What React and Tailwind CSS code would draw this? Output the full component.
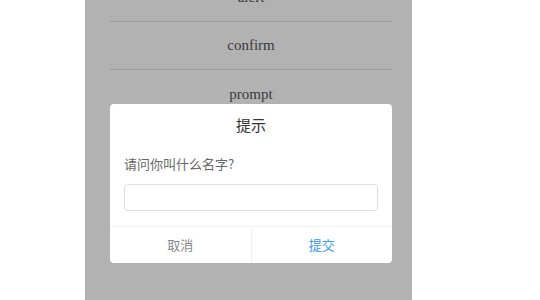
import React from 'react';

const items = ['alert', 'confirm', 'prompt'];

const App = () => {
  return (
    <div className="w-[540px] h-[300px] bg-white overflow-hidden">
      <div className="relative ml-[85px] w-[327px] h-[300px] bg-[#b2b2b2] overflow-hidden">
        <div className="-mt-[26px] pl-[25px] pr-[20px]">
          {items.map((name, i) => (
            <div
              key={name}
              className={`h-[48px] flex items-center justify-center text-[15px] text-[#3a3a3a] ${i < items.length - 1 ? 'border-b border-[#9c9c9c]' : ''}`}
              style={{ fontFamily: '"Liberation Serif", "Times New Roman", serif' }}
            >
              {name}
            </div>
          ))}
        </div>

        <div
          className="absolute left-[25px] top-[104px] w-[282px] bg-white rounded-[4px]"
          style={{ fontFamily: '"Noto Sans CJK SC", "Liberation Sans", sans-serif' }}
        >
          <div className="h-[42px] flex items-center justify-center text-[15px] text-[#333]">提示</div>
          <div className="px-[14px] pt-[8px] text-[13px] text-[#666] leading-[20px]">请问你叫什么名字?</div>
          <div className="px-[14px] pt-[10px]">
            <input
              type="text"
              className="w-full h-[27px] border border-[#dedede] rounded-[4px] outline-none"
            />
          </div>
          <div className="mt-[15px] h-[37px] flex border-t border-[#f2f2f2] text-[13px]">
            <div className="flex-1 flex items-center justify-center text-[#888] border-r border-[#f0f0f0]">取消</div>
            <div className="flex-1 flex items-center justify-center text-[#3a9cf5]">提交</div>
          </div>
        </div>
      </div>
    </div>
  );
};

export default App;
